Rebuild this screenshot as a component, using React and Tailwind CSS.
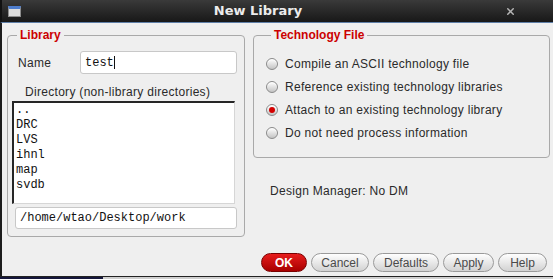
import React from 'react';
import { X } from 'lucide-react';

const dirs = ['..', 'DRC', 'LVS', 'ihnl', 'map', 'svdb'];

const techOptions = [
  { label: 'Compile an ASCII technology file', checked: false },
  { label: 'Reference existing technology libraries', checked: false },
  { label: 'Attach to an existing technology library', checked: true },
  { label: 'Do not need process information', checked: false },
];

const buttons = [
  { label: 'Cancel', w: 'w-[58px]' },
  { label: 'Defaults', w: 'w-[66px]' },
  { label: 'Apply', w: 'w-[51px]' },
  { label: 'Help', w: 'w-[49px]' },
];

const Radio = ({ checked }) => (
  <span className="w-[12px] h-[12px] rounded-full border border-[#8a8a8a] bg-gradient-to-b from-[#ffffff] to-[#c4c4c4] shadow-[inset_0_1px_1px_rgba(255,255,255,0.9)] flex items-center justify-center shrink-0">
    {checked && <span className="w-[6px] h-[6px] rounded-full bg-[#d40000]" />}
  </span>
);

const App = () => {
  return (
    <div className="w-[553px] h-[279px] flex flex-col bg-[#efefef] overflow-hidden font-['Liberation_Sans',Arial,sans-serif] text-[12px] tracking-[0.3px] text-[#2a2a2a]">
      {/* Title bar */}
      <div className="h-[23px] shrink-0 flex items-center bg-gradient-to-b from-[#3a3a3a] to-[#181818] border-b border-[#5f7fa8] border-l-[2px] border-l-[#111] tracking-normal">
        <div className="ml-[6px] w-[13px] h-[11px] bg-[#dcdcdc] border border-[#8d8d8d] border-t-[3px] border-t-[#4d7ccc]" />
        <div className="flex-1 text-center pr-[10px] font-['DejaVu_Sans',sans-serif] font-bold text-[13px] text-[#ececec]">
          New Library
        </div>
        <X size={11} strokeWidth={3.2} className="text-[#b5b5b5] mr-[37px]" />
      </div>

      {/* Body */}
      <div className="flex-1 flex flex-col border-l-[2px] border-[#1c1c1c]">
        <div className="flex pl-[5px] pt-[4px]">
          {/* Library group */}
          <fieldset className="w-[238px] h-[210px] border border-[#a9a9a9] rounded-[4px] pl-[4px] pr-[7px] pb-[6px] flex flex-col">
            <legend className="ml-[5px] px-[3px] leading-[16px] font-bold tracking-normal text-[#cc0000]">Library</legend>
            <div className="flex items-center mt-[8px] pl-[6px]">
              <span>Name</span>
              <div className="ml-auto w-[157px] h-[23px] bg-white border border-[#c8c8c8] rounded-[3px] flex items-center pl-[4px] font-['Liberation_Mono',monospace] text-[12px] tracking-normal text-[#111]">
                test<span className="w-px h-[13px] bg-[#111]" />
              </div>
            </div>
            <div className="mt-[11px] pl-[13px] leading-[14px]">Directory (non-library directories)</div>
            <div className="mt-[2px] w-[223px] h-[103px] bg-white border-l-[2px] border-t-[2px] border-[#262626] border-r border-b border-r-[#d6d6d6] border-b-[#d6d6d6] pl-[2px] font-['Liberation_Mono',monospace] text-[12px] leading-[15px] tracking-normal text-[#111]">
              {dirs.map((d) => (
                <div key={d}>{d}</div>
              ))}
            </div>
            <div className="mt-[3px] ml-[3px] w-[222px] h-[22px] bg-white border border-[#c8c8c8] rounded-[3px] flex items-center pl-[4px] font-['Liberation_Mono',monospace] text-[12px] tracking-normal text-[#111]">
              /home/wtao/Desktop/work
            </div>
          </fieldset>

          {/* Right column */}
          <div className="ml-[8px] w-[297px] flex flex-col">
            <fieldset className="border border-[#a9a9a9] rounded-[4px] pl-[12px] pt-[9px] pb-[13px]">
              <legend className="ml-[5px] px-[3px] leading-[16px] font-bold tracking-normal text-[#cc0000]">Technology File</legend>
              {techOptions.map((o) => (
                <div key={o.label} className="h-[23px] flex items-center gap-[7px]">
                  <Radio checked={o.checked} />
                  <span>{o.label}</span>
                </div>
              ))}
            </fieldset>
            <div className="mt-[26px] pl-[17px] leading-[14px]">Design Manager: No DM</div>
          </div>
        </div>

        {/* Buttons */}
        <div className="mt-auto mb-[4px] pr-[6px] flex justify-end gap-[4px] tracking-normal">
          <button className="w-[46px] h-[19px] rounded-full border border-[#7a0000] bg-gradient-to-b from-[#e81c1c] to-[#a80000] text-white font-bold text-[12px] leading-none">
            OK
          </button>
          {buttons.map((b) => (
            <button
              key={b.label}
              className={`${b.w} h-[19px] rounded-full border border-[#9a9a9a] bg-gradient-to-b from-[#ffffff] to-[#d2d2d2] text-[#4a4a4a] text-[12px] leading-none`}
            >
              {b.label}
            </button>
          ))}
        </div>
      </div>

      {/* Bottom edge */}
      <div className="h-[3px] shrink-0 flex border-t border-[#222]">
        <div className="w-[103px] bg-[#15163a]" />
        <div className="flex-1 bg-[#cfcfcf]" />
      </div>
    </div>
  );
};

export default App;
